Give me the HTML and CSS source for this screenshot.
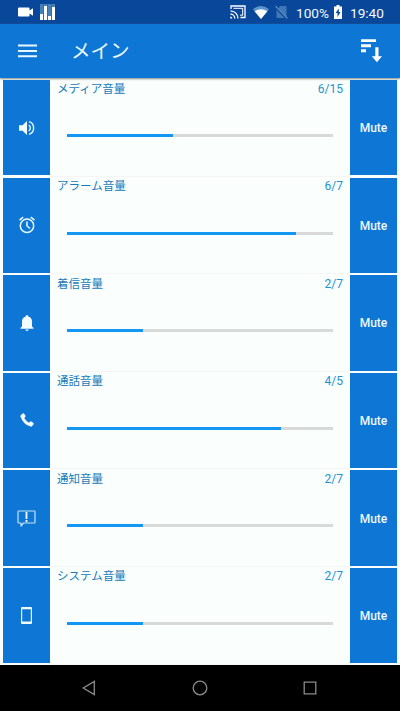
FILE: index.html
```html
<!DOCTYPE html>
<html lang="ja">
<head>
<meta charset="utf-8">
<title>メイン</title>
<link rel="stylesheet" href="styles.css">
</head>
<body>
<div class="status">
  <svg class="camera" width="16" height="10" viewBox="0 0 16 10"><path fill="#fff" d="M1 .5h9.500q1 0 1 1v2L15 1.200v7.600l-3.500-2.300V8.500q0 1-1 1H1q-1 0-1-1v-7q0-1 1-1z"/></svg>
  <svg class="levels" width="15" height="16" viewBox="0 0 15 16"><path fill="#4681b8" d="M0 0h15v16H0z"/><path fill="#2f6cac" d="M3 0h1v16H3zM7 0h1v16H7zM11 0h1v16h-1z"/><path fill="#fff" d="M0 10h3v6H0zM4 2h3v14H4zM8 12h3v4H8zM12 3h3v13h-3z"/></svg>
  <svg class="cast" width="16" height="14" viewBox="0 0 16 14"><g fill="none" stroke="#fff" stroke-width="1.300"><path d="M1 4V1h14v11.500H10.500"/><path d="M.5 9a4.500 4.500 0 0 1 4.300 4.500M.5 5.800a7.700 7.700 0 0 1 7.500 7.700"/><path stroke-width="1" d="M3.500 3.300h9.200v6.900H10"/></g><path fill="#fff" d="M.3 11.500A2 2 0 0 1 2.300 13.500h-2z"/></svg>
  <svg class="wifi" width="16" height="13" viewBox="0 0 16 13"><path fill="#5c93ca" d="M0 3.200Q8-3 16 3.200L8 13z"/><path fill="#fff" d="M1.600 5.200Q8 1.500 14.400 5.200L8 13z"/></svg>
  <svg class="sim" width="13" height="14" viewBox="0 0 13 14"><path fill="#3f78b7" d="M5 1h6.500v12L3.300 4.200zM1.500 4.800 9.500 13h-8z"/><path d="M.5 1 12.500 13.500" stroke="#5289c2" stroke-width="1.200"/></svg>
  <span class="percent">100%</span>
  <svg class="battery" width="8" height="14" viewBox="0 0 8 14"><path fill="#fff" d="M2.500 0h3v1.500H8V14H0V1.500h2.500z"/><path fill="#08479a" d="M4.800 3.500 1.600 8h1.900v4L6.500 7H4.800z"/></svg>
  <span class="clock">19:40</span>
</div>
<header class="bar">
  <svg class="menu" width="19" height="14" viewBox="0 0 19 14"><path fill="#e8f8ff" d="M0 .5h19v2H0zM0 6h19v2H0zM0 11.300h19v2H0z"/></svg>
  <h1>メイン</h1>
  <svg class="sort" width="22" height="24" viewBox="0 0 22 24"><path fill="#fff" d="M0 .3h15v2.800H0zM0 5.300h10v2.900H0zM0 10.300h5v2.900H0zM14.300 8.200h3.200v9H21l-5.100 6-5.100-6h3.500z"/></svg>
</header>
<main>
  <section class="row">
    <div class="side"><svg width="16" height="16" viewBox="0 0 16 16"><path fill="#f4fdff" d="M0 5.300h3.500L8 1v14l-4.500-4.300H0z"/><path fill="none" stroke="#e5f8ff" stroke-width="1.400" d="M9.700 5a3.600 3.600 0 0 1 0 6M10 1.700a6.600 6.600 0 0 1 0 12.600"/></svg></div>
    <div class="body"><div class="head"><span>メディア音量</span><span class="value">6/15</span></div><div class="track"><div class="fill" style="width:40%"></div></div></div>
    <div class="side"><span>Mute</span></div>
  </section>
  <section class="row">
    <div class="side"><svg width="18" height="18" viewBox="0 0 18 18"><g fill="none" stroke="#e9faff" stroke-width="1.500"><circle cx="9" cy="9.700" r="6.700"/><path d="M9 5.500V10l3 2.500M1.500 4.200 5.200 1.200M12.800 1.200l3.700 3"/></g></svg></div>
    <div class="body"><div class="head"><span>アラーム音量</span><span class="value">6/7</span></div><div class="track"><div class="fill" style="width:86.200%"></div></div></div>
    <div class="side"><span>Mute</span></div>
  </section>
  <section class="row">
    <div class="side"><svg width="14" height="16" viewBox="0 0 14 16"><path fill="#f4fdff" d="M7 0q1.300 0 1.300 1.600Q12 2.600 12 6.500v5l1.500 1.300v1H.5v-1L2 11.500v-5q0-3.900 3.700-4.900Q5.700 0 7 0zM5.400 14.400h3.200Q8.300 16 7 16t-1.600-1.600z"/></svg></div>
    <div class="body"><div class="head"><span>着信音量</span><span class="value">2/7</span></div><div class="track"><div class="fill" style="width:28.500%"></div></div></div>
    <div class="side"><span>Mute</span></div>
  </section>
  <section class="row">
    <div class="side"><svg width="14" height="14" viewBox="0 0 14 14"><path fill="#f4fdff" d="M.8 2.200 2.600.5q.7-.5 1.300.1l1.500 2q.5.700-.1 1.300L4.200 5q1.800 3 4.800 4.700l1.100-1q.6-.6 1.300-.1l2 1.400q.7.600.2 1.300l-1.700 2q-.5.500-1.300.3Q3.400 11.800.4 3.500.2 2.700.8 2.200z"/></svg></div>
    <div class="body"><div class="head"><span>通話音量</span><span class="value">4/5</span></div><div class="track"><div class="fill" style="width:80.300%"></div></div></div>
    <div class="side"><span>Mute</span></div>
  </section>
  <section class="row">
    <div class="side"><svg width="19" height="17" viewBox="0 0 19 17"><path fill="none" stroke="#c4e4f5" stroke-width="1.200" stroke-linejoin="round" d="M1.800 1h15.400q.8 0 .8.800v10.400q0 .8-.8.800H6.500L4 16v-3H1.800Q1 13 1 12.200V1.800Q1 1 1.800 1z"/><path fill="#fff" d="M8.600 2h1.800v7H8.600zM8.600 10h1.800v2H8.600z"/></svg></div>
    <div class="body"><div class="head"><span>通知音量</span><span class="value">2/7</span></div><div class="track"><div class="fill" style="width:28.500%"></div></div></div>
    <div class="side"><span>Mute</span></div>
  </section>
  <section class="row">
    <div class="side"><svg width="11" height="17" viewBox="0 0 11 17"><path fill="#f0fbff" fill-rule="evenodd" d="M1 0h9q1 0 1 1v15q0 1-1 1H1q-1 0-1-1V1Q0 0 1 0zM1.200 2.300v12.200h8.600V2.300z"/></svg></div>
    <div class="body"><div class="head"><span>システム音量</span><span class="value">2/7</span></div><div class="track"><div class="fill" style="width:28.500%"></div></div></div>
    <div class="side"><span>Mute</span></div>
  </section>
</main>
<nav>
  <svg width="14" height="16" viewBox="0 0 14 16"><path d="M12.300 1.500v13L1.300 8z"/></svg>
  <svg width="16" height="16" viewBox="0 0 16 16"><circle cx="8" cy="8" r="6.800"/></svg>
  <svg width="14" height="14" viewBox="0 0 14 14"><path d="M1.200 1.200h11.600v11.600H1.200z"/></svg>
</nav>
</body>
</html>
```
FILE: styles.css
```css
* { box-sizing: border-box; }
body {
  margin: 0;
  width: 400px;
  height: 711px;
  overflow: hidden;
  display: flex;
  flex-direction: column;
  background: #fafffe;
  font-family: Roboto, "Noto Sans CJK JP", sans-serif;
}
svg { display: block; flex: none; }
.status {
  height: 23.500px;
  flex: none;
  display: flex;
  align-items: center;
  padding: 1px 0 0 18px;
  background: #08479a;
  color: #f4faff;
  font-size: 13.600px;
  line-height: 16px;
}
.levels { margin-left: 6px; }
.cast { margin-left: 175px; }
.wifi { margin-left: 7px; }
.sim { margin-left: 6px; }
.percent { margin: 1px 0 0 8px; width: 34px; white-space: nowrap; }
.battery { margin-left: 4px; }
.clock { margin: 1px 0 0 8px; }
.bar {
  height: 54.500px;
  flex: none;
  display: flex;
  align-items: center;
  padding: 0 17px 0 18px;
  background: #0e76d5;
  box-shadow: 0 1px 2px #888;
}
.bar h1 {
  margin: 2px auto 0 34px;
  color: #e9f8ff;
  font-size: 19.500px;
  line-height: 28px;
  font-weight: 400;
}
main {
  height: 587px;
  flex: none;
  padding: 2px 3px 0;
}
.row {
  height: 97.600px;
  display: flex;
}
.side {
  width: 47px;
  height: 95.400px;
  flex: none;
  display: flex;
  align-items: center;
  justify-content: center;
  background: #0e76d5;
  color: #f1faff;
  font-size: 12px;
  font-weight: 500;
  line-height: 16px;
}
.side span { margin-top: 1px; }
.body {
  flex: 1;
  height: 96.600px;
  padding: 0.500px 7px 0;
  border-bottom: 1px solid #f7f4f4;
}
.head {
  display: flex;
  justify-content: space-between;
  font-size: 11.500px;
  line-height: 16px;
  color: #187bb9;
}
.value { color: #2492cf; font-size: 12px; }
.track {
  height: 3px;
  margin: 37.500px 10px 0;
  background: #d9d9d9;
}
.fill { height: 3px; background: #1298f3; }
nav {
  flex: 1;
  display: flex;
  align-items: center;
  justify-content: space-between;
  padding: 0 83px 0 82px;
  background: #000;
}
nav path, nav circle { fill: none; stroke: #8b8b8b; stroke-width: 1.300; }
```
